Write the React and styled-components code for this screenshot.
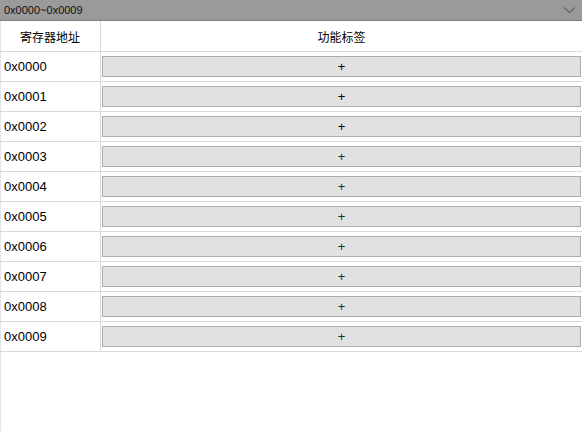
import React from "react";
import styled, { createGlobalStyle } from "styled-components";

const Global = createGlobalStyle`
  html, body { margin: 0; padding: 0; background: #ffffff; }
  body { font-family: "Liberation Sans", "Noto Sans CJK SC", sans-serif; }
`;

const Page = styled.div`
  width: 582px;
  height: 431px;
  display: flex;
  flex-direction: column;
  overflow: hidden;
`;

const TitleBar = styled.div`
  height: 20px;
  flex: none;
  background: #9a9a9a;
  border-bottom: 1px solid #7e7e7e;
  display: flex;
  align-items: center;
  justify-content: space-between;
  padding: 0 6px 0 4px;
  font-size: 11px;
  color: #111;
`;

const Body = styled.div`
  flex: 1;
  border-left: 1px solid #dfe6ee;
`;

const Table = styled.div`
  display: grid;
  grid-template-columns: 101px 1fr;
  margin-left: -1px;
`;

const Cell = styled.div`
  height: ${(p) => (p.$head ? "30px" : "29px")};
  border-bottom: 1px solid #dadada;
  border-right: ${(p) => (p.$first ? "1px solid #dadada" : "none")};
  display: flex;
  align-items: center;
  justify-content: ${(p) => (p.$center ? "center" : "flex-start")};
  padding-left: ${(p) => (p.$center ? "0" : "4px")};
  font-size: ${(p) => (p.$head ? "12px" : "13px")};
  font-family: ${(p) =>
    p.$head
      ? '"Noto Sans CJK SC", "Liberation Sans", sans-serif'
      : '"Liberation Sans", "Noto Sans CJK SC", sans-serif'};
  color: #000;
`;

const ButtonCell = styled.div`
  box-sizing: border-box;
  height: 30px;
  border-bottom: 1px solid #dadada;
  padding: 4px 1px 4px 1px;
`;

const AddButton = styled.button`
  width: 100%;
  height: 21px;
  margin: 0;
  padding: 0;
  background: #e1e1e1;
  border: 1px solid #adadad;
  font-family: "Liberation Sans", sans-serif;
  font-size: 13px;
  line-height: 1;
  color: ${(p) => (p.$tint ? "#0b3b22" : "#000")};
  display: flex;
  align-items: center;
  justify-content: center;
`;

const Chevron = () => (
  <svg width="13" height="8" viewBox="0 0 13 8">
    <path d="M1 1.5 L6.5 6.5 L12 1.5" fill="none" stroke="#6a6a6a" strokeWidth="1.3" />
  </svg>
);

const rows = Array.from({ length: 10 }, (_, i) => "0x000" + i);

export default function App() {
  return (
    <Page>
      <Global />
      <TitleBar>
        <span>0x0000~0x0009</span>
        <Chevron />
      </TitleBar>
      <Body>
        <Table>
          <Cell $first $head $center>寄存器地址</Cell>
          <Cell $head $center>功能标签</Cell>
          {rows.map((r, i) => (
            <React.Fragment key={r}>
              <Cell $first>{r}</Cell>
              <ButtonCell>
                <AddButton $tint={i >= 3}>+</AddButton>
              </ButtonCell>
            </React.Fragment>
          ))}
        </Table>
      </Body>
    </Page>
  );
}
